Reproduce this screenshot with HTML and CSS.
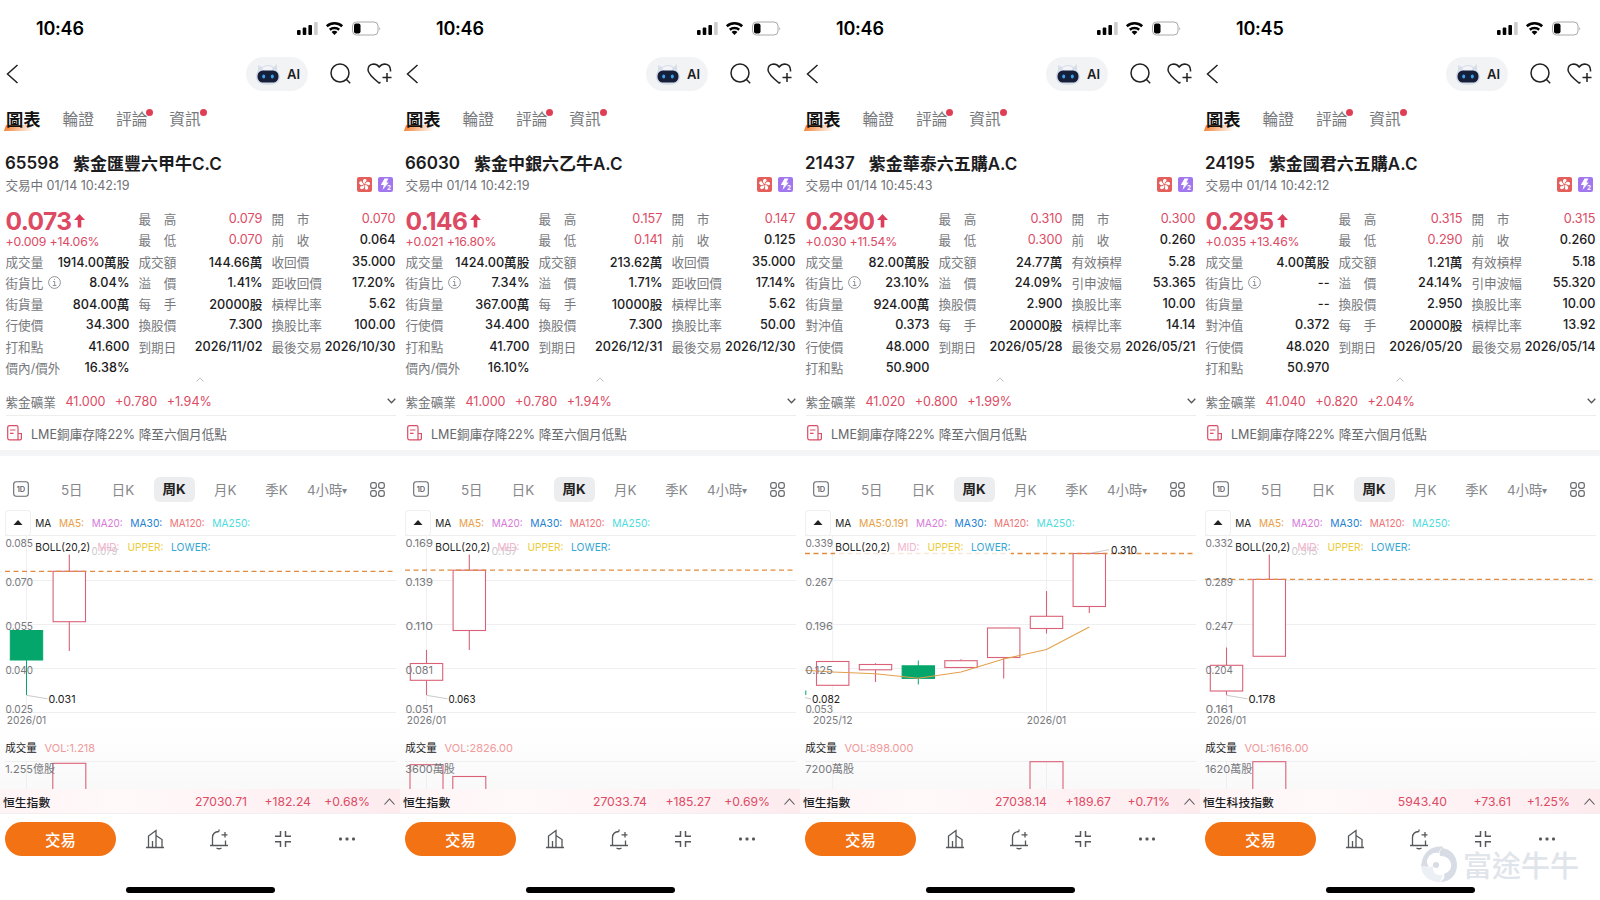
FILE: index.html
```
<!DOCTYPE html>
<html lang="zh-Hant">

<head>
    <meta charset="UTF-8">
    <title>紫金礦業 窩輪牛熊證</title>
    <link rel="stylesheet" href="styles.css">
</head>

<body>
    <!-- Phone screens get added here -->
    <main class="screens"></main>

    <!-- Watermark -->
    <div class="watermark">
        <svg width="38" height="38" viewBox="0 0 38 38">
            <path d="M2 16C5 5 14 0 24 2c-3 1-5 3-5 6-5-1-9 1-11 5-2 3-1 6 1 9l-8-1z" />
            <path d="M22 3c9 1 15 8 15 17 0 10-7 17-17 17 4-2 5-5 4-8 6-2 9-7 6-13-2-4-6-5-10-5-1-3 0-6 2-8z" />
            <path d="M1 20c4 3 8 3 12 1-1 6 3 10 10 9l-3 7C9 37 1 30 1 20z" opacity=".45" />
            <circle cx="16" cy="20" r="3" />
        </svg>
        <span>富途牛牛</span>
    </div>

    <script src="app.js"></script>
</body>

</html>
```

FILE: styles.css
```
body {
    margin: 0;
    background: #fff;
    color: #1c1c1e;
    font-family: Inter, "Noto Sans CJK TC", sans-serif;
    font-size: 12.6px;
}

svg {
    display: block;
    flex-shrink: 0;
}

.screens {
    display: grid;
    grid-template-columns: repeat(4, 400px);
    width: 1600px;
    height: 900px;
    overflow: hidden;
}

.phone {
    display: flex;
    flex-direction: column;
    width: 400px;
    height: 900px;
    overflow: hidden;
    white-space: nowrap;
}

.red {
    color: #dc4a64;
}

/* Status bar */
.status {
    display: flex;
    align-items: center;
    justify-content: space-between;
    height: 56px;
    padding: 0 19px 0 36px;
}

.time {
    color: #000;
    font-size: 18px;
    font-weight: 600;
    letter-spacing: -0.2px;
}

/* Nav */
.nav {
    display: flex;
    align-items: center;
    height: 35px;
    padding: 0 8px 0 6px;
}

.ai {
    display: flex;
    align-items: center;
    gap: 6px;
    width: 53px;
    height: 34px;
    margin: 0 22px 0 auto;
    padding-left: 9px;
    border-radius: 17px;
    background: #f1f3f5;
    font-size: 13px;
    font-weight: 600;
}

.nav .heart {
    margin-left: 16px;
}

/* Tabs */
.tabs {
    display: flex;
    align-items: center;
    gap: 22px;
    height: 54px;
    padding-left: 6px;
    color: #77797d;
    font-size: 15.7px;
}

.tab {
    position: relative;
}

.tab.active {
    color: #111;
    font-size: 17.3px;
    font-weight: 700;
    z-index: 0;
}

.tab.active::before {
    content: "";
    position: absolute;
    z-index: -1;
    left: -1px;
    bottom: 0;
    width: 29px;
    height: 6px;
    background: linear-gradient(90deg, #f58337, #fff);
    transform: skewX(-20deg);
}

.tab.dot::after {
    content: "";
    position: absolute;
    top: 2px;
    right: -6px;
    width: 7px;
    height: 7px;
    border-radius: 50%;
    background: #e23d57;
}

/* Title */
.title {
    display: flex;
    align-items: center;
    gap: 14px;
    height: 23px;
    margin-top: 6px;
    padding-left: 5px;
    font-size: 17px;
    font-weight: 600;
}

.sub {
    display: flex;
    align-items: center;
    gap: 6px;
    height: 21px;
    padding: 0 7px 0 5.5px;
    color: #707276;
}

.sub span {
    margin-right: auto;
    letter-spacing: -0.05px;
}

/* Quote table */
.quote {
    display: grid;
    grid-template-columns: repeat(3, 124px);
    grid-auto-rows: 21.25px;
    column-gap: 9px;
    margin: 13px 0 0 5.5px;
}

.price {
    grid-row: span 2;
}

.last {
    display: flex;
    align-items: center;
    gap: 3px;
    height: 26px;
    font-size: 24.5px;
    font-weight: 700;
    letter-spacing: -0.6px;
}

.change {
    line-height: 16px;
    font-size: 12.3px;
    letter-spacing: -0.2px;
}

.cell {
    display: flex;
    align-items: center;
    justify-content: space-between;
}

.cell .label {
    display: flex;
    align-items: center;
    gap: 5px;
    color: #77797d;
}

.cell .value {
    font-size: 12.7px;
}

.cell .value:not(.red) {
    font-weight: 500;
}

.collapse {
    display: flex;
    justify-content: center;
    height: 7px;
    margin-top: -4px;
    padding-top: 3px;
    padding-bottom: 3px;
}

/* Underlying stock and news */
.stock {
    display: flex;
    align-items: center;
    gap: 9.5px;
    height: 28px;
    margin: 0 4px 0 5.5px;
    border-bottom: 1px solid #eee;
    color: #707276;
}

.stock svg {
    margin-left: auto;
}

.news {
    display: flex;
    align-items: center;
    gap: 9px;
    height: 34px;
    padding-left: 7px;
    color: #66686c;
}

.band {
    height: 6px;
    background: #f3f5f6;
}

/* Periods */
.periods {
    display: flex;
    align-items: center;
    height: 26px;
    margin: 20px 0 6px;
    padding-left: 13px;
    color: #85878b;
    font-size: 13.4px;
}

.period {
    width: 51.3px;
    text-align: center;
}

.period.first {
    margin-left: 17px;
}

.period.active {
    width: 41px;
    margin: 0 5px;
    border-radius: 6px;
    background: #ecedef;
    color: #222;
    font-weight: 700;
    line-height: 25px;
}

.period.hours {
    width: 46px;
    margin: 0 20px 0 2px;
}

.period small {
    font-size: 10px;
    vertical-align: 1px;
}

/* Chart */
.chart text {
    dominant-baseline: central;
    font-size: 11px;
    fill: #77797d;
}

.chart .dark {
    fill: #222;
}

.chart .grid {
    stroke: #efeff1;
}

.chart .last-line {
    stroke: #e08b3e;
    stroke-width: 1.3;
    stroke-dasharray: 5 3.5;
}

.chart .up {
    fill: #fff;
    stroke: #da6177;
    stroke-width: 1.1;
}

.chart .down {
    fill: #05a66b;
    stroke: #05a66b;
    stroke-width: 1;
}

.chart .ma {
    fill: none;
    stroke: #e3a04c;
    stroke-width: 1.1;
}

.chart .lead {
    stroke: #bbb;
    stroke-width: .8;
}

.chart .faint {
    fill: #ccc;
}

/* Index strip */
.index {
    display: flex;
    align-items: center;
    height: 24px;
    padding: 0 5px 0 3px;
    border-bottom: 1px solid #f3eff0;
    background: linear-gradient(90deg, #fef3f5, #fff9fa 30%, #fdebee);
}

.index .name {
    margin-right: auto;
    font-size: 11.8px;
    font-weight: 500;
}

.index .num {
    width: 64px;
    text-align: right;
    font-size: 12.2px;
}

.index .pct {
    width: 59px;
}

.index svg {
    margin-left: 14px;
}

/* Bottom toolbar */
.toolbar {
    display: flex;
    align-items: center;
    height: 34px;
    padding: 8px 0 0 5px;
}

.trade {
    width: 143px;
    height: 34px;
    margin-right: 28px;
    padding: 0;
    border: none;
    border-radius: 17px;
    background: #f37213;
    color: #fff;
    font: 500 15.4px Inter, "Noto Sans CJK TC", sans-serif;
}

.toolbar svg {
    margin-right: 42px;
}

.home {
    width: 149px;
    height: 5.5px;
    margin: 31px 0 0 126px;
    border-radius: 3px;
    background: #000;
}

.watermark {
    position: absolute;
    left: 1420px;
    top: 845px;
    display: flex;
    align-items: center;
    gap: 5px;
    height: 38px;
    color: #dfe3ea;
    font-size: 29px;
    font-weight: 500;
    opacity: .95;
}

.watermark svg {
    fill: #d5dbe4;
}
```

FILE: app.js
```
const phones = [
    {
        time: '10:46', code: '65598', name: '紫金匯豐六甲牛C.C', updated: '01/14 10:42:19',
        last: '0.073', change: '+0.009 +14.06%',
        cells: [
            ['最　高', '0.079', 1], ['開　市', '0.070', 1],
            ['最　低', '0.070', 1], ['前　收', '0.064'],
            ['成交量', '1914.00萬股'], ['成交額', '144.66萬'], ['收回價', '35.000'],
            ['街貨比', '8.04%'], ['溢　價', '1.41%'], ['距收回價', '17.20%'],
            ['街貨量', '804.00萬'], ['每　手', '20000股'], ['槓桿比率', '5.62'],
            ['行使價', '34.300'], ['換股價', '7.300'], ['換股比率', '100.00'],
            ['打和點', '41.600'], ['到期日', '2026/11/02'], ['最後交易', '2026/10/30'],
            ['價內/價外', '16.38%']
        ],
        stock: ['41.000', '+0.780', '+1.94%'],
        axis: ['0.085', '0.070', '0.055', '0.040', '0.025'],
        dates: [[26.5, '2026/01']],
        line: 571.3,
        // x, body top, body bottom, high, low, direction
        candles: [[26.5, 630.5, 660, 630.5, 695, 'down'], [69.3, 571.3, 621.7, 554.5, 651, 'up']],
        low: '0.031', high: '0.079',
        vol: '1.218', volAxis: '1.255億股', bars: [[69.3, 763.3]],
        index: ['恒生指數', '27030.71', '+182.24', '+0.68%']
    },
    {
        time: '10:46', code: '66030', name: '紫金中銀六乙牛A.C', updated: '01/14 10:42:19',
        last: '0.146', change: '+0.021 +16.80%',
        cells: [
            ['最　高', '0.157', 1], ['開　市', '0.147', 1],
            ['最　低', '0.141', 1], ['前　收', '0.125'],
            ['成交量', '1424.00萬股'], ['成交額', '213.62萬'], ['收回價', '35.000'],
            ['街貨比', '7.34%'], ['溢　價', '1.71%'], ['距收回價', '17.14%'],
            ['街貨量', '367.00萬'], ['每　手', '10000股'], ['槓桿比率', '5.62'],
            ['行使價', '34.400'], ['換股價', '7.300'], ['換股比率', '50.00'],
            ['打和點', '41.700'], ['到期日', '2026/12/31'], ['最後交易', '2026/12/30'],
            ['價內/價外', '16.10%']
        ],
        stock: ['41.000', '+0.780', '+1.94%'],
        axis: ['0.169', '0.139', '0.110', '0.081', '0.051'],
        dates: [[26.5, '2026/01']],
        line: 570.2,
        candles: [[26.5, 663.5, 680.3, 650, 695, 'up'], [69.3, 570.2, 630.5, 554.5, 650, 'up']],
        low: '0.063', high: '0.157',
        vol: '2826.00', volAxis: '3600萬股', bars: [[26.5, 764.7], [69.3, 776.5]],
        index: ['恒生指數', '27033.74', '+185.27', '+0.69%']
    },
    {
        time: '10:46', code: '21437', name: '紫金華泰六五購A.C', updated: '01/14 10:45:43',
        last: '0.290', change: '+0.030 +11.54%',
        cells: [
            ['最　高', '0.310', 1], ['開　市', '0.300', 1],
            ['最　低', '0.300', 1], ['前　收', '0.260'],
            ['成交量', '82.00萬股'], ['成交額', '24.77萬'], ['有效槓桿', '5.28'],
            ['街貨比', '23.10%'], ['溢　價', '24.09%'], ['引申波幅', '53.365'],
            ['街貨量', '924.00萬'], ['換股價', '2.900'], ['換股比率', '10.00'],
            ['對沖值', '0.373'], ['每　手', '20000股'], ['槓桿比率', '14.14'],
            ['行使價', '48.000'], ['到期日', '2026/05/28'], ['最後交易', '2026/05/21'],
            ['打和點', '50.900']
        ],
        stock: ['41.020', '+0.800', '+1.99%'],
        axis: ['0.339', '0.267', '0.196', '0.125', '0.053'],
        dates: [[32.7, '2025/12'], [246.5, '2026/01']],
        line: 553.5,
        candles: [
            [32.7, 661.5, 685.3, 661.5, 685.3, 'up'],
            [75.5, 664.5, 669.8, 663.3, 682, 'up'],
            [118.3, 665.8, 678.4, 660.5, 684.5, 'down'],
            [161, 660.7, 667.5, 659.3, 667.5, 'up'],
            [203.7, 628, 657.5, 628, 678.5, 'up'],
            [246.5, 616.3, 628.5, 591, 633.5, 'up'],
            [289.3, 553.5, 606.5, 553.5, 613, 'up']
        ],
        ma5: '0.191',
        maLine: '5,670.3 32.7,672 75.5,673.7 118.3,678.3 161,672 203.7,659 246.5,649.5 289.3,627',
        low: '0.082', high: '0.310',
        vol: '898.000', volAxis: '7200萬股', bars: [[246.5, 761.7]],
        index: ['恒生指數', '27038.14', '+189.67', '+0.71%']
    },
    {
        time: '10:45', code: '24195', name: '紫金國君六五購A.C', updated: '01/14 10:42:12',
        last: '0.295', change: '+0.035 +13.46%',
        cells: [
            ['最　高', '0.315', 1], ['開　市', '0.315', 1],
            ['最　低', '0.290', 1], ['前　收', '0.260'],
            ['成交量', '4.00萬股'], ['成交額', '1.21萬'], ['有效槓桿', '5.18'],
            ['街貨比', '--'], ['溢　價', '24.14%'], ['引申波幅', '55.320'],
            ['街貨量', '--'], ['換股價', '2.950'], ['換股比率', '10.00'],
            ['對沖值', '0.372'], ['每　手', '20000股'], ['槓桿比率', '13.92'],
            ['行使價', '48.020'], ['到期日', '2026/05/20'], ['最後交易', '2026/05/14'],
            ['打和點', '50.970']
        ],
        stock: ['41.040', '+0.820', '+2.04%'],
        axis: ['0.332', '0.289', '0.247', '0.204', '0.161'],
        dates: [[26.5, '2026/01']],
        line: 579.4,
        candles: [[26.5, 665.3, 691, 647.5, 695, 'up'], [69.3, 579.4, 656.3, 554.5, 656.3, 'up']],
        low: '0.178', high: '0.315',
        vol: '1616.00', volAxis: '1620萬股', bars: [[69.3, 761.7]],
        index: ['恒生科技指數', '5943.40', '+73.61', '+1.25%']
    }
];

const icons = {
    status: `<svg width="85" height="16" viewBox="0 0 85 16">
        <rect x="1" y="10" width="3.6" height="5" rx="1"/><rect x="6.7" y="7.500" width="3.6" height="7.500" rx="1"/>
        <rect x="12.400" y="5" width="3.600" height="10" rx="1"/><rect x="18.100" y="2" width="3.600" height="13" rx="1" fill="#ccc"/>
        <g fill="none" stroke="#000" stroke-width="2.500"><path d="M30.800 6.300a11.500 11.500 0 0 1 15.400 0M33.800 9.800a7 7 0 0 1 9.400 0"/></g>
        <path d="M38.500 15l-2.900-3a4 4 0 0 1 5.800 0z"/>
        <rect x="56.500" y="2" width="25.500" height="13" rx="4" fill="none" stroke="#aaa"/>
        <rect x="58" y="3.500" width="6.500" height="10" rx="2"/><path d="M83.300 6.500q1.700 2 0 4z" fill="#aaa"/></svg>`,
    back: '<svg width="13" height="20" viewBox="0 0 13 20" fill="none" stroke="#222" stroke-width="1.500"><path d="M11.500 1L1.500 10l10 9"/></svg>',
    robot: `<svg width="26" height="24" viewBox="0 0 26 24"><path d="M3 3l4 2q6-4 12 0l3-3v6q3 4 3 8-1 7-12 7T1 16q0-5 2-8z" fill="#d8dee9"/>
        <path d="M7 6q6-4 11 0l-2 3H9z" fill="#f2f4f7"/><rect x="2.500" y="8.500" width="21" height="12" rx="5.500" fill="#16203b"/>
        <ellipse cx="8.700" cy="14.500" rx="1.500" ry="2" fill="#3aa5ee"/><ellipse cx="17.300" cy="14.500" rx="1.500" ry="2" fill="#3aa5ee"/></svg>`,
    search: '<svg width="21" height="21" viewBox="0 0 21 21" fill="none" stroke="#222" stroke-width="1.500"><circle cx="10" cy="10" r="9"/><path d="M16.500 16.500l3.700 3.700"/></svg>',
    heart: '<svg width="25" height="21" viewBox="0 0 25 21" fill="none" stroke="#222" stroke-width="1.500"><path d="M13.500 19.300L12 20Q1 11 1 7q0-5.500 5.500-6Q10 1 12.200 4 14.500 1 18 1q5.300.500 5.500 6v1.500M20 10v9M15.500 14.500h9"/></svg>',
    flower: `<svg width="15" height="15" viewBox="0 0 15 15"><rect width="15" height="15" rx="2" fill="#e45f5b"/><g fill="#fff">
        ${[0, 72, 144, 216, 288].map(a => `<path d="M7.500 7Q4.500 4.500 7 2q3-.500 2.500 2Q8 5 7.500 7z" transform="rotate(${a} 7.500 7.500)"/>`).join('')}</g></svg>`,
    bolt: '<svg width="15" height="15" viewBox="0 0 15 15"><rect width="15" height="15" rx="2" fill="#a176f0"/><path d="M6.500 1.500h4L8.300 5.500h2.500L4.500 13l1.300-5H2.800z" fill="#fff"/><text x="9" y="13" font-size="6.500" font-weight="700" fill="#fff">2</text></svg>',
    arrow: '<svg width="11" height="14" viewBox="0 0 11 14"><path d="M5.500 0L11 6H7.300v7.500H3.700V6H0z" fill="#dc3e59"/></svg>',
    info: '<svg width="13" height="13" viewBox="0 0 13 13" fill="none" stroke="#85878b" stroke-width=".9"><circle cx="6.500" cy="6.500" r="5.900"/><path d="M5 5.500h1.700v4M4.800 9.500h3.600M6 3.400h1"/></svg>',
    up: '<svg width="8" height="5" viewBox="0 0 8 5" fill="none" stroke="#bbb"><path d="M.500 4.500L4 .800l3.500 3.700"/></svg>',
    down: '<svg width="9" height="6" viewBox="0 0 9 6" fill="none" stroke="#55575b" stroke-width="1.300"><path d="M.700 .700l3.800 4 3.800-4"/></svg>',
    news: '<svg width="15" height="16" viewBox="0 0 15 16" fill="none" stroke="#dc4a64" stroke-width="1.200"><path d="M11 14.800H2.500Q.700 14.800.700 13V2.500Q.700.700 2.500.700h7Q11 .700 11 2.500v12.300h2q1.400 0 1.400-1.400V8.500H11M3 5h5.500M3 8.300h3.500"/></svg>',
    day: '<svg width="16" height="16" viewBox="0 0 16 16"><rect x=".7" y=".7" width="14.600" height="14.600" rx="2.500" fill="none" stroke="#66686c" stroke-width="1.100"/><text x="8" y="11" text-anchor="middle" font-size="7.500" font-weight="600" fill="#66686c">1D</text></svg>',
    four: '<svg width="15" height="15" viewBox="0 0 15 15" fill="none" stroke="#66686c" stroke-width="1.200"><rect x=".7" y=".7" width="5.600" height="5.600" rx="2"/><rect x="8.700" y=".7" width="5.600" height="5.600" rx="2"/><rect x=".7" y="8.700" width="5.600" height="5.600" rx="2"/><rect x="8.700" y="8.700" width="5.600" height="5.600" rx="2"/></svg>',
    expand: '<svg width="11" height="7" viewBox="0 0 11 7" fill="none" stroke="#55575b" stroke-width="1.100"><path d="M.500 6.500l5-5.500 5 5.500"/></svg>',
    building: '<svg width="22" height="22" viewBox="0 0 22 22" fill="none" stroke="#55575b" stroke-width="1.300"><path d="M2 19.500h18M4.500 19.500V8L12 2.500v17M12 7.500l6 4v8M8.500 19.500V13"/></svg>',
    bell: '<svg width="22" height="22" viewBox="0 0 22 22" fill="none" stroke="#55575b" stroke-width="1.300"><path d="M2 17.500h18M4.500 17.500V9.500Q4.500 4 11 3.500M11 1.500v2M17.500 12.500v5M8.500 20q2.500 1.500 5 0M17 4v5.500M13.500 6.800h6"/></svg>',
    shrink: '<svg width="22" height="22" viewBox="0 0 22 22" fill="none" stroke="#55575b" stroke-width="1.500"><path d="M3 8.300h5.500V3M19 8.300h-5.500V3M3 13.700h5.500V19M19 13.700h-5.500V19"/></svg>',
    more: '<svg width="22" height="22" viewBox="0 0 22 22" fill="#55575b"><rect x="3" y="9.500" width="3" height="3" rx="1"/><rect x="9.500" y="9.500" width="3" height="3" rx="1"/><rect x="16" y="9.500" width="3" height="3" rx="1"/></svg>'
};

function text(x, y, value, color, width, extra = '') {
    const length = width ? `textLength="${width}" lengthAdjust="spacingAndGlyphs"` : '';
    return `<text x="${x}" y="${y}" style="fill:${color}" ${length} ${extra}>${value}</text>`;
}

function drawChart(p) {
    const wide = p.ma5 ? 24.3 : 0;
    const gridY = [535.5, 580.5, 624.5, 668.5, 712.5];
    const labelY = [543, 581.5, 625.5, 670, 708.5];

    const grid = [...gridY, 761.5].map(y => `<path class="grid" d="M5 ${y}H396"/>`).join('') +
        p.dates.map(d => `<path class="grid" d="M${d[0]} 536V712M${d[0]} 762V789"/>`).join('');

    const candles = p.candles.map(([x, top, bottom, high, low, dir]) => `<g class="${dir}">
        <path d="M${x} ${high}V${top}M${x} ${bottom}V${low}"/>
        <rect x="${x - 16.2}" y="${top}" width="32.4" height="${bottom - top}"/></g>`).join('');

    const bars = p.bars.map(([x, top]) => `<rect class="up" style="fill:none" x="${x - 16.5}" y="${top}" width="33" height="40"/>`).join('');

    const axis = p.axis.map((v, i) => text(5.5, labelY[i], v, '#77797d', 27.5)).join('');
    const dates = p.dates.map(d => text(d[0], 720.3, d[1], '#77797d', 39.5, 'text-anchor="middle"')).join('');

    // The third chart has its callouts on the other sides
    const callouts = p.ma5
        ? `<path class="down" d="M5.800 690.500V695"/><path class="lead" d="M5 697.500l6 1.500M291 553l18-3.300"/>` +
            text(12, 699.3, p.low, '#222', 28) + text(311, 550.3, p.high, '#222', 26)
        : `<path class="lead" d="M26.500 695.300l21 3.500"/>` + text(48.5, 699.3, p.low, '#222', 27) +
            text(91.5, 550.5, p.high, '#ccc', 26);
    const mask = p.ma5 ? '<rect x="35" y="538" width="176" height="18" fill="#fff" opacity=".8"/>' : '';

    return `<svg class="chart" width="400" height="281" viewBox="0 508 400 281">
        <defs><linearGradient id="fade" x2="0" y2="1"><stop stop-color="#fff"/><stop offset="1" stop-color="#f9f9fa"/></linearGradient></defs>
        <rect y="725" width="400" height="64" fill="url(#fade)"/>
        ${grid}${candles}
        <path class="last-line" d="M5 ${p.line}H396"/>
        ${p.maLine ? `<polyline class="ma" points="${p.maLine}"/>` : ''}
        ${mask}${axis}${dates}${callouts}${bars}
        <rect x="5.500" y="510.500" width="25" height="25" rx="3" fill="#fff" stroke="#eee"/>
        <path d="M13.500 525l4.500-5 4.500 5z" fill="#222"/>
        ${text(35.3, 522.5, 'MA', '#222', 16)}
        ${text(59, 522.5, 'MA5:' + (p.ma5 || ''), '#e8a045', 25 + wide)}
        ${text(91.7 + wide, 522.5, 'MA20:', '#d77bd9', 31)}
        ${text(130.3 + wide, 522.5, 'MA30:', '#1f7fd4', 32)}
        ${text(169.7 + wide, 522.5, 'MA120:', '#ec7476', 35)}
        ${text(212.3 + wide, 522.5, 'MA250:', '#4fdcdc', 38)}
        ${text(35.3, 547, 'BOLL(20,2)', '#222', 55)}
        ${text(97.5, 547, 'MID:', '#f3b3cc', 22)}
        ${text(127.5, 547, 'UPPER:', '#eccb3c', 36)}
        ${text(171, 547, 'LOWER:', '#36a5d4', 39.5)}
        ${text(5.3, 748, '成交量', '#222', 31.5)}
        ${text(44.5, 748, 'VOL:' + p.vol, '#f19a9b')}
        ${text(5.3, 769, p.volAxis, '#77797d')}
    </svg>`;
}

function drawPhone(p) {
    const cells = p.cells.map(([label, value, red]) => `<div class="cell">
        <span class="label">${label}${label === '街貨比' ? icons.info : ''}</span>
        <span class="value ${red ? 'red' : ''}">${value}</span></div>`);
    // the second row starts after the two cells beside the price
    return `<section class="phone">
        <div class="status"><span class="time">${p.time}</span>${icons.status}</div>
        <div class="nav">${icons.back}<div class="ai">${icons.robot}AI</div>${icons.search}<span class="heart">${icons.heart}</span></div>
        <div class="tabs"><span class="tab active">圖表</span><span class="tab">輪證</span><span class="tab dot">評論</span><span class="tab dot">資訊</span></div>
        <div class="title"><span>${p.code}</span><span>${p.name}</span></div>
        <div class="sub"><span>交易中 ${p.updated}</span>${icons.flower}${icons.bolt}</div>
        <div class="quote">
            <div class="price red"><div class="last">${p.last}${icons.arrow}</div><div class="change">${p.change}</div></div>
            ${cells.join('')}
        </div>
        <div class="collapse">${icons.up}</div>
        <div class="stock"><span>紫金礦業</span>${p.stock.map(s => `<span class="red">${s}</span>`).join('')}${icons.down}</div>
        <div class="news">${icons.news}<span>LME銅庫存降22% 降至六個月低點</span></div>
        <div class="band"></div>
        <div class="periods">${icons.day}<span class="period first">5日</span><span class="period">日K</span><span class="period active">周K</span><span class="period">月K</span><span class="period">季K</span><span class="period hours">4小時<small>▾</small></span>${icons.four}</div>
        ${drawChart(p)}
        <div class="index"><span class="name">${p.index[0]}</span><span class="num red">${p.index[1]}</span><span class="num red">${p.index[2]}</span><span class="num pct red">${p.index[3]}</span>${icons.expand}</div>
        <div class="toolbar"><button class="trade">交易</button>${icons.building}${icons.bell}${icons.shrink}${icons.more}</div>
        <div class="home"></div>
    </section>`;
}

document.querySelector('.screens').innerHTML = phones.map(drawPhone).join('');
```
